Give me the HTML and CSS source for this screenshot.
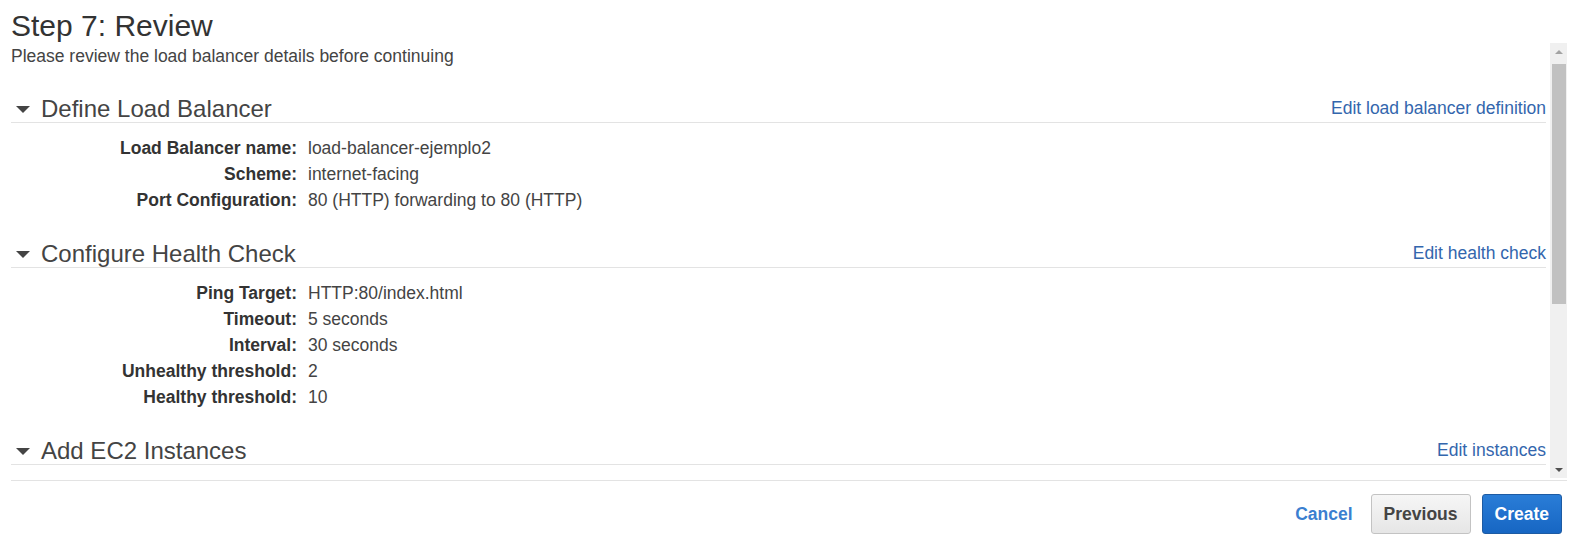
FILE: index.html
```html
<!DOCTYPE html>
<html lang="en">

<head>
	<meta charset="utf-8">
	<title>Step 7: Review</title>
	<link rel="stylesheet" href="styles.css">
</head>

<body>
	<div class="wizard">
		<h1 class="wizard-title">Step 7: Review</h1>

		<div class="review-frame">
			<div class="review-content">
				<p class="wizard-subtitle">Please review the load balancer details before continuing</p>

				<section class="review-section">
					<div class="section-head">
						<h2 class="section-title"><span class="caret"></span>Define Load Balancer</h2>
						<a class="section-edit" href="#">Edit load balancer definition</a>
					</div>
					<dl class="details">
						<dt>Load Balancer name:</dt><dd>load-balancer-ejemplo2</dd>
						<dt>Scheme:</dt><dd>internet-facing</dd>
						<dt>Port Configuration:</dt><dd>80 (HTTP) forwarding to 80 (HTTP)</dd>
					</dl>
				</section>

				<section class="review-section">
					<div class="section-head">
						<h2 class="section-title"><span class="caret"></span>Configure Health Check</h2>
						<a class="section-edit" href="#">Edit health check</a>
					</div>
					<dl class="details">
						<dt>Ping Target:</dt><dd>HTTP:80/index.html</dd>
						<dt>Timeout:</dt><dd>5 seconds</dd>
						<dt>Interval:</dt><dd>30 seconds</dd>
						<dt>Unhealthy threshold:</dt><dd>2</dd>
						<dt>Healthy threshold:</dt><dd>10</dd>
					</dl>
				</section>

				<section class="review-section">
					<div class="section-head">
						<h2 class="section-title"><span class="caret"></span>Add EC2 Instances</h2>
						<a class="section-edit" href="#">Edit instances</a>
					</div>
				</section>
			</div>

			<div class="scrollbar">
				<div class="scroll-btn"><span class="arrow-up"></span></div>
				<div class="scroll-track"><div class="scroll-thumb"></div></div>
				<div class="scroll-btn"><span class="arrow-down"></span></div>
			</div>
		</div>

		<div class="wizard-footer">
			<a class="btn-link" href="#">Cancel</a>
			<button class="btn">Previous</button>
			<button class="btn btn-primary">Create</button>
		</div>
	</div>
</body>

</html>
```

FILE: styles.css
```css
body {
	margin: 0;
	background-color: #fff;
	color: #444;
	font-family: 'Liberation Sans', Arial, sans-serif;
}

.wizard {
	padding: 0 4px 0 11px;
}

.wizard-title {
	margin: 0;
	padding-top: 9px;
	color: #333;
	font-size: 30px;
	font-weight: normal;
	line-height: 34px;
}

.review-frame {
	display: flex;
	height: 435px;
}
.review-content {
	flex: 1;
	overflow: hidden;
	padding-right: 4px;
}

.wizard-subtitle {
	margin: 3px 0 29px;
	font-size: 17.5px;
	line-height: 20px;
}

.section-head {
	display: flex;
	justify-content: space-between;
	border-bottom: 1px solid #e3e3e3;
	line-height: 27px;
}
.section-title {
	display: flex;
	align-items: center;
	margin: 0;
	color: #444;
	font-size: 24px;
	font-weight: normal;
}
.caret {
	width: 0;
	height: 0;
	margin: 1px 11px 0 5px;
	border-left: 7px solid transparent;
	border-right: 7px solid transparent;
	border-top: 7px solid #444;
}
.section-edit {
	color: #3366ad;
	font-size: 17.5px;
	text-decoration: none;
}

.details {
	display: grid;
	grid-template-columns: 286px 1fr;
	column-gap: 11px;
	margin: 0;
	padding: 12px 0 27px;
	font-size: 17.5px;
	line-height: 26px;
}
.details dt {
	color: #333;
	font-weight: bold;
	text-align: right;
}
.details dd {
	margin: 0;
}

/* fake scrollbar, content is clipped rather than scrolled */
.scrollbar {
	display: flex;
	flex-direction: column;
	width: 17px;
	background-color: #f0f0f0;
}
.scroll-btn {
	display: flex;
	align-items: center;
	justify-content: center;
	height: 17px;
}
.arrow-up, .arrow-down {
	width: 0;
	height: 0;
	border-left: 4px solid transparent;
	border-right: 4px solid transparent;
}
.arrow-up {
	border-bottom: 4px solid #a3a3a3;
}
.arrow-down {
	border-top: 4px solid #505050;
}
.scroll-track {
	flex: 1;
	padding: 4px 1px 0 2px;
}
.scroll-thumb {
	height: 240px;
	background-color: #c1c1c1;
}

.wizard-footer {
	display: flex;
	justify-content: flex-end;
	align-items: center;
	margin-top: 2px;
	padding: 13px 5px 0 0;
	border-top: 1px solid #e3e3e3;
}
.btn-link {
	margin-right: 18px;
	color: #3b7fd0;
	font-size: 17.5px;
	font-weight: bold;
	text-decoration: none;
}
.btn {
	height: 40px;
	padding: 0 12px;
	border: 1px solid #c3c3c3;
	border-radius: 3px;
	background: linear-gradient(#f6f6f6, #e6e6e6);
	color: #444;
	font-family: inherit;
	font-size: 17.5px;
	font-weight: bold;
}
.btn + .btn {
	margin-left: 11px;
}
.btn-primary {
	border-color: #1d5ba3;
	background: linear-gradient(#2a7dd7, #1766c3);
	color: #fff;
}
```
